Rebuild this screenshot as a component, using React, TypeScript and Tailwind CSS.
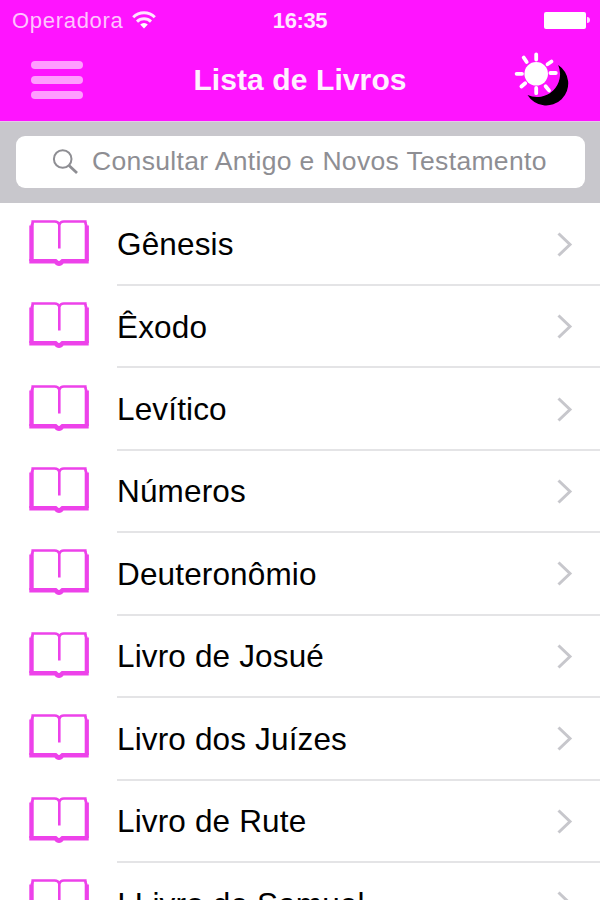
const BOOKS = [
  'Gênesis',
  'Êxodo',
  'Levítico',
  'Números',
  'Deuteronômio',
  'Livro de Josué',
  'Livro dos Juízes',
  'Livro de Rute',
  'I Livro de Samuel',
];

function WifiIcon() {
  return (
    <svg className="ml-[9px] h-[18px] w-[24px]" viewBox="0 0 24 18" fill="none" stroke="#ffe6ff" strokeWidth="2.9">
      <path d="M1.2 6.2a15.2 15.2 0 0 1 21.6 0" />
      <path d="M5 10.6a9.9 9.9 0 0 1 14 0" />
      <path d="M12 17.6l-3.8-4a5.2 5.2 0 0 1 7.6 0z" fill="#fff" stroke="none" />
    </svg>
  );
}

function DayNightIcon() {
  return (
    <svg className="h-[56px] w-[56px]" viewBox="514 52 56 56">
      <path d="M558.2 65A22 22 0 1 1 527.5 95A23 23 0 0 0 558.2 65z" fill="#000" />
      <circle cx="536.2" cy="73.8" r="11.8" fill="#fff" />
      <g stroke="#fff" strokeWidth="3.8" strokeLinecap="round">
        <path d="M536.2 59.5v-5.2M536.2 88v5.2M522 73.8h-5.4M550.4 73h5.4" />
        <path d="M526.7 62l-3-4.5M547.5 64.3l4-2.8M525.2 83.2l-3.8 3.3M545.6 86.2l3.4 4.2" />
      </g>
    </svg>
  );
}

function BookIcon() {
  return (
    <svg className="mb-[6px] ml-[29px] h-[48px] w-[60px] shrink-0" viewBox="0 0 60 48" fill="none" stroke="#ed42ea">
      <path d="M30.3 30.5V6.5c-.8-2.2-2.2-3-4.5-3H3.7c0 2-.3 3-1.5 4.5" strokeWidth="2.6" />
      <path d="M30.3 6.5c.8-2.2 2.2-3 4.5-3h21.5c0 2 .3 3 1.5 4.5" strokeWidth="2.6" />
      <path d="M3.8 4v38M56.6 4v38" strokeWidth="1.8" />
      <path d="M2 7.5V43M58.2 7.5V43" strokeWidth="3.4" />
      <path d="M.3 41h59.4v4.6H34.5C33.5 47 32 48 30 48s-3.5-1-4.5-2.4H.3z" fill="#ed42ea" stroke="none" />
      <path d="M27 41h6c-1 0-2 2-3 2s-2-2-3-2z" fill="#fff" stroke="none" />
    </svg>
  );
}

function BookRow({ title }: { title: string }) {
  return (
    <li className="flex h-[82.45px] shrink-0 items-center">
      <BookIcon />
      <div className="ml-7 flex h-full flex-1 items-center justify-between border-b-2 border-[#e4e4e6]">
        <span className="whitespace-nowrap pt-[2px] text-[31.5px] tracking-[0.15px] text-black">{title}</span>
        <svg className="mr-[27px] h-[28px] w-[16px]" viewBox="0 0 16 28" fill="none" stroke="#c7c7cc" strokeWidth="3">
          <path d="M1.5 3.5L13 14.5 1.5 25.5" />
        </svg>
      </div>
    </li>
  );
}

export default function App() {
  return (
    <div className="flex h-[900px] w-[600px] flex-col overflow-hidden bg-white font-['Liberation_Sans',Arial,sans-serif]">
      <header className="h-[121px] shrink-0 bg-[#ff14ff]">
        {/* Status bar */}
        <div className="grid h-10 grid-cols-3 items-center">
          <div className="flex items-center pl-3 text-[22px] text-[#ffc4ff]">
            <span className="tracking-[0.7px]">Operadora</span>
            <WifiIcon />
          </div>
          <span className="text-center text-[22px] font-bold tracking-[-0.4px] text-[#ffe8ff]">16:35</span>
          <div className="flex items-center justify-end gap-px pr-[10px]">
            <div className="h-[17px] w-[42px] rounded-[2px] bg-white" />
            <div className="h-[6px] w-[3px] rounded-r-full bg-[#ffd8ff]" />
          </div>
        </div>

        {/* Navigation bar */}
        <div className="flex h-20 items-center justify-between pl-[31px] pr-[30px]">
          <button className="flex w-[55px] flex-col gap-[7px]" aria-label="Menu">
            <span className="h-2 w-[52px] rounded-full bg-[#ff9dff]" />
            <span className="h-2 w-[52px] rounded-full bg-[#ff9dff]" />
            <span className="h-2 w-[52px] rounded-full bg-[#ff9dff]" />
          </button>
          <h1 className="pb-0.5 text-[30px] font-bold tracking-[0.1px] text-[#fff0ff]">Lista de Livros</h1>
          <DayNightIcon />
        </div>
      </header>

      {/* Search */}
      <div className="flex h-[82px] shrink-0 items-center border-t border-[#e6c6ea] bg-[#c8c7cc] pb-[1px] pl-4">
        <div className="flex h-[52px] w-[569px] items-center rounded-[9px] bg-white pl-9">
          <svg className="h-7 w-7" viewBox="0 0 28 28" fill="none" stroke="#8e8e93">
            <circle cx="10.7" cy="11" r="8.8" strokeWidth="2" />
            <path d="M17 17.5l8 7.5" strokeWidth="2.8" />
          </svg>
          <span className="ml-3 whitespace-nowrap text-[26.5px] tracking-[0.34px] text-[#8e8e93]">Consultar Antigo e Novos Testamento</span>
        </div>
      </div>

      <ul className="flex flex-1 flex-col overflow-hidden pt-[0.5px]">
        {BOOKS.map(title => (
          <BookRow key={title} title={title} />
        ))}
      </ul>
    </div>
  );
}
